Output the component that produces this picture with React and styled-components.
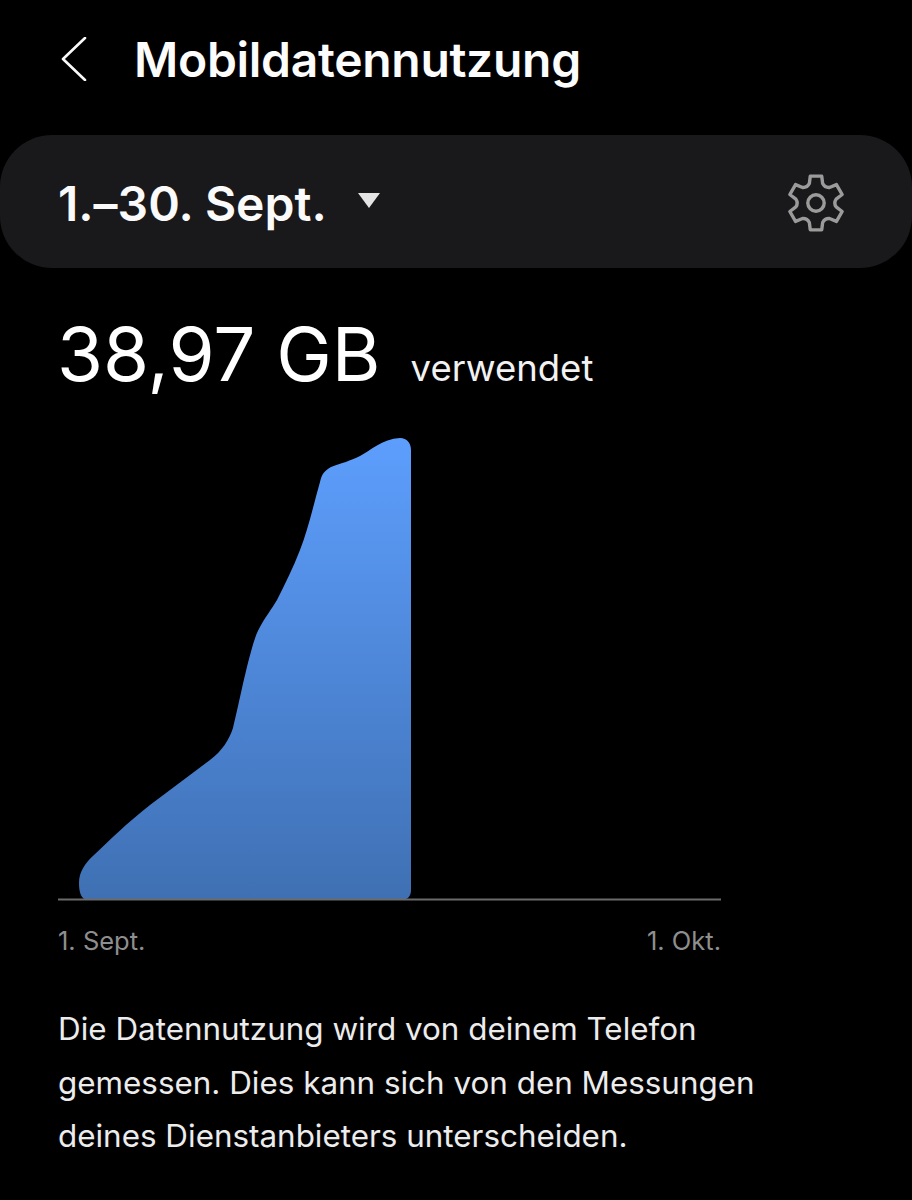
import React from 'react'
import styled, { createGlobalStyle } from 'styled-components'

const GlobalStyle = createGlobalStyle`
  html, body {
    margin: 0;
    background: #000;
  }
  body {
    font-family: Inter, "Noto Sans", sans-serif;
    color: #fafafa;
  }
`

const Page = styled.div`
  width: 912px;
  height: 1200px;
  overflow: hidden;
  background: #000;
`

const Header = styled.header`
  display: flex;
  align-items: center;
  height: 135px;
  padding-left: 60px;
  padding-bottom: 16px;
  box-sizing: border-box;
  gap: 46px;
`

const BackIcon = styled.svg`
  width: 28px;
  height: 44px;
  margin-top: -2px;
  flex: none;
`

const Title = styled.h1`
  margin: 0;
  font-size: 48px;
  font-weight: 600;
  letter-spacing: -0.3px;
  line-height: 56px;
  color: #fcfcfc;
`

const PeriodBar = styled.div`
  display: flex;
  align-items: center;
  justify-content: space-between;
  height: 133px;
  padding: 3px 66px 0 58px;
  box-sizing: border-box;
  border-radius: 52px;
  background: #19191b;
`

const PeriodPicker = styled.div`
  display: flex;
  align-items: center;
  gap: 31px;
`

const PeriodLabel = styled.span`
  font-size: 48px;
  font-weight: 600;
  font-feature-settings: "calt" 0;
  color: #fafafa;
`

const Caret = styled.span`
  width: 0;
  height: 0;
  margin-bottom: 5px;
  border-left: 11px solid transparent;
  border-right: 11px solid transparent;
  border-top: 15px solid #e4e4e4;
`

const GearIcon = styled.svg`
  width: 60px;
  height: 60px;
  flex: none;
`

const Usage = styled.div`
  display: flex;
  align-items: baseline;
  gap: 30px;
  height: 162px;
  padding: 41px 0 0 57px;
  box-sizing: border-box;
`

const UsageValue = styled.span`
  font-size: 74.5px;
  font-weight: 400;
  line-height: 90px;
  color: #fff;
`

const UsageUnit = styled.span`
  font-size: 36.5px;
  font-weight: 400;
  color: #f2f2f2;
`

const ChartSvg = styled.svg`
  display: block;
  width: 912px;
  height: 480px;
`

const AxisLabels = styled.div`
  display: flex;
  justify-content: space-between;
  width: 663px;
  margin: 15px 0 0 58px;
  font-size: 25.5px;
  line-height: 32px;
  color: #8e8e8e;
`

const Note = styled.p`
  margin: 46px 0 0 58px;
  width: 780px;
  font-size: 31.4px;
  line-height: 53.5px;
  color: #ececec;
`

// six tooth outline, same shape as the phone's settings cog
const gearPath = () => {
  const cx = 30
  const cy = 30
  const pt = (r, deg) => {
    const a = ((deg - 90) * Math.PI) / 180
    return `${(cx + r * Math.cos(a)).toFixed(2)} ${(cy + r * Math.sin(a)).toFixed(2)}`
  }
  let d = ''
  for (let i = 0; i < 6; i++) {
    const a = i * 60
    d += `${i === 0 ? 'M' : 'L'}${pt(27.5, a - 12)} L${pt(27.5, a + 12)} `
    d += `L${pt(20.5, a + 19)} Q${pt(17.5, a + 30)} ${pt(20.5, a + 41)} `
  }
  return d + 'Z'
}

const App = () => {
  return (
    <Page>
      <GlobalStyle />
      <Header>
        <BackIcon viewBox="0 0 28 44" fill="none">
          <path d="M25 1 L3 22 L25 43" stroke="#fafafa" strokeWidth="2.6" strokeLinecap="round" strokeLinejoin="round" />
        </BackIcon>
        <Title>Mobildatennutzung</Title>
      </Header>

      <PeriodBar>
        <PeriodPicker>
          <PeriodLabel>1.–30. Sept.</PeriodLabel>
          <Caret />
        </PeriodPicker>
        <GearIcon viewBox="0 0 60 60" fill="none">
          <path d={gearPath()} stroke="#9b9b9b" strokeWidth="3.4" strokeLinejoin="round" />
          <circle cx="30" cy="30" r="8.2" stroke="#9b9b9b" strokeWidth="3.4" />
        </GearIcon>
      </PeriodBar>

      <Usage>
        <UsageValue>38,97 GB</UsageValue>
        <UsageUnit>verwendet</UsageUnit>
      </Usage>

      <ChartSvg viewBox="0 430 912 480">
        <defs>
          <linearGradient id="fillBlue" x1="0" y1="438" x2="0" y2="900" gradientUnits="userSpaceOnUse">
            <stop offset="0" stopColor="#5d9efd" />
            <stop offset="1" stopColor="#3f70b3" />
          </linearGradient>
        </defs>
        <path
          d="M87 900 C81 899 79 892 79 883 C79 872 85 863 94 855 C110 840 128 822 150 805 C170 790 190 775 210 760 C222 751 229 740 233 728 C238 708 245 672 252 648 C254 641 256 634 260 627 C266 616 271 610 277 600 C285 584 293 568 300 550 C308 530 314 503 320 482 C322 474 324 471 331 467 C342 463 350 461 360 456 C370 451 382 439 400 438 C407 438 411 443 411 450 L411 890 C411 897 407 900 400 900 Z"
          fill="url(#fillBlue)"
        />
        <line x1="58" y1="899.5" x2="721" y2="899.5" stroke="#6b6b6b" strokeWidth="2" />
      </ChartSvg>

      <AxisLabels>
        <span>1. Sept.</span>
        <span>1. Okt.</span>
      </AxisLabels>

      <Note>
        Die Datennutzung wird von deinem Telefon<br />
        gemessen. Dies kann sich von den Messungen<br />
        deines Dienstanbieters unterscheiden.
      </Note>
    </Page>
  )
}

export default App
